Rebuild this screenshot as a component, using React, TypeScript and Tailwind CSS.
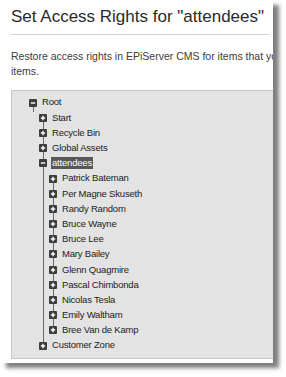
import React from 'react';

type Node = { label: string; open?: boolean; selected?: boolean; children?: Node[] };

const people = [
  'Patrick Bateman',
  'Per Magne Skuseth',
  'Randy Random',
  'Bruce Wayne',
  'Bruce Lee',
  'Mary Bailey',
  'Glenn Quagmire',
  'Pascal Chimbonda',
  'Nicolas Tesla',
  'Emily Waltham',
  'Bree Van de Kamp',
];

const tree: Node = {
  label: 'Root',
  open: true,
  children: [
    { label: 'Start' },
    { label: 'Recycle Bin' },
    { label: 'Global Assets' },
    { label: 'attendees', open: true, selected: true, children: people.map((p) => ({ label: p })) },
    { label: 'Customer Zone' },
  ],
};

function Toggle({ open }: { open?: boolean }) {
  return (
    <svg width="8" height="8" viewBox="0 0 8 8" className="relative z-10 shrink-0">
      <rect x="0" y="0" width="8" height="8" rx="1" fill="#3d3d3d" />
      <path d="M1.8 4h4.4" stroke="#fff" strokeWidth="1.4" />
      {!open && <path d="M4 1.8v4.4" stroke="#fff" strokeWidth="1.4" />}
    </svg>
  );
}

function TreeNode({ node, depth }: { node: Node; depth: number }) {
  const pad = ['pl-[17px]', 'pl-[27px]', 'pl-[37px]'][depth];
  const lineLeft = ['left-[21px]', 'left-[31px]', 'left-[41px]'][depth + 1];
  return (
    <div>
      <div className={`relative h-[15.2px] flex items-center gap-[5px] ${pad}`}>
        <Toggle open={node.open} />
        <span
          className={
            node.selected
              ? 'bg-[#585858] text-white -ml-[1px] px-[1px] leading-[12px]'
              : 'text-[#222]'
          }
        >
          {node.label}
        </span>
        {depth === 0 && <div className="absolute left-[21px] top-[11px] h-[6px] w-px bg-[#6a6a6a]" />}
      </div>
      {node.open && node.children && (
        <div className="relative">
          <div className={`absolute ${lineLeft} top-[7px] bottom-[7px] w-px bg-[#6a6a6a]`} />
          {node.children.map((c) => (
            <TreeNode key={c.label} node={c} depth={depth + 1} />
          ))}
        </div>
      )}
    </div>
  );
}

export default function App() {
  return (
    <div className="w-[286px] h-[377px] bg-white font-['Liberation_Sans',Arial,sans-serif]">
      <div className="w-[273px] h-[363px] bg-white overflow-hidden shadow-[6px_5px_4px_rgba(0,0,0,0.5)] pl-[11px]">
        <h1 className="pt-[7px] text-[17px] leading-[20px] text-[#2a2a2a] whitespace-nowrap">
          Set Access Rights for "attendees"
        </h1>
        <div className="mt-[7px] mr-[4px] border-t border-[#d2d2d2]" />
        <p className="mt-[14px] text-[10.5px] leading-[15px] text-[#3c3c3c] whitespace-nowrap">
          Restore access rights in EPiServer CMS for items that you
          <br />
          items.
        </p>
        <div className="mt-[11px] w-[300px] h-[269px] border border-[#c6c6c6] bg-[#e3e3e3] pt-[4px] text-[9.5px] tracking-[-0.2px]">
          <TreeNode node={tree} depth={0} />
        </div>
      </div>
    </div>
  );
}
